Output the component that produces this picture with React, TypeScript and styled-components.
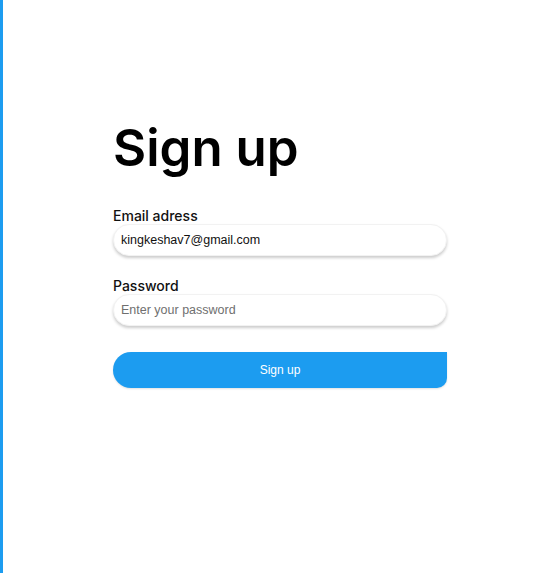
import * as React from "react";
import styled, { createGlobalStyle } from "styled-components";

const GlobalStyle = createGlobalStyle`
  html, body {
    margin: 0;
    padding: 0;
    background: #ffffff;
  }
`;

const Page = styled.div`
  width: 100vw;
  height: 100vh;
  box-sizing: border-box;
  border-left: 3px solid #1c9cf0;
  display: flex;
  background: #ffffff;
`;

const Form = styled.form`
  display: flex;
  flex-direction: column;
  width: 334px;
  margin-left: 110px;
  padding-top: 114px;
`;

const Title = styled.h1`
  margin: 0 0 25px 0;
  font-family: "Inter", "DejaVu Sans", sans-serif;
  font-weight: 600;
  font-size: 51px;
  line-height: 68px;
  color: #000000;
`;

const Label = styled.label`
  font-family: "Inter", "Open Sans", sans-serif;
  font-weight: 500;
  font-size: 14px;
  line-height: 17px;
  color: #111111;
`;

const Input = styled.input<{ $gap?: number }>`
  box-sizing: border-box;
  width: 100%;
  height: 32px;
  border: 1px solid #f2f2f2;
  border-radius: 16px;
  padding: 0 7px;
  font-family: "Liberation Sans", Arial, sans-serif;
  font-size: 12.5px;
  color: #111111;
  background: #ffffff;
  box-shadow: 0 2px 3px rgba(0, 0, 0, 0.2);
  outline: none;
  margin-bottom: ${(p) => p.$gap ?? 20}px;

  &::placeholder {
    color: #6f6f6f;
  }
`;

const Button = styled.button`
  height: 36px;
  width: 100%;
  border: none;
  border-radius: 18px 0 10px 18px;
  background: #1c9cf0;
  color: #ffffff;
  font-family: "Liberation Sans", Arial, sans-serif;
  font-size: 12px;
  cursor: pointer;
  box-shadow: 0 1px 2px rgba(0, 0, 0, 0.12);
`;

const App = () => {
  return (
    <>
      <GlobalStyle />
      <Page>
        <Form onSubmit={(e) => e.preventDefault()}>
          <Title>Sign up</Title>
          <Label htmlFor="email">Email adress</Label>
          <Input id="email" type="email" defaultValue="kingkeshav7@gmail.com" $gap={21} />
          <Label htmlFor="password">Password</Label>
          <Input id="password" type="password" placeholder="Enter your password" $gap={26} />
          <Button type="submit">Sign up</Button>
        </Form>
      </Page>
    </>
  );
};

export default App;
